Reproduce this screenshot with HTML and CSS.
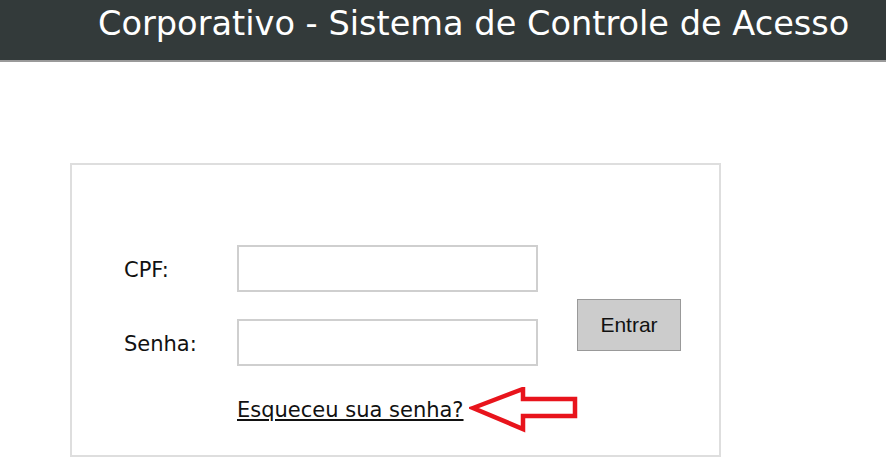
FILE: index.html
```html
<!DOCTYPE html>
<html lang="pt-BR">
<head>
<meta charset="utf-8">
<title>Corporativo - Sistema de Controle de Acesso</title>
<link rel="stylesheet" href="styles.css">
</head>
<body>
<header class="topbar">
  <h1 class="title">Corporativo - Sistema de Controle de Acesso</h1>
</header>
<main class="page">
  <section class="login-box">
    <form class="login-form">
      <label class="field-label row1" for="cpf">CPF:</label>
      <input class="field-input row1" id="cpf" type="text">
      <label class="field-label row2" for="senha">Senha:</label>
      <input class="field-input row2" id="senha" type="password">
      <button class="btn-enter" type="button">Entrar</button>
      <div class="forgot-row">
        <a class="forgot-link" href="#">Esqueceu sua senha?</a>
        <svg class="arrow" width="112" height="46" viewBox="0 0 112 46">
          <polygon points="4,21 54,2 54,12 106,12 106,29 54,29 54,42" fill="#fff" stroke="#e8141c" stroke-width="4.5" stroke-linejoin="miter"/>
        </svg>
      </div>
    </form>
  </section>
</main>
</body>
</html>
```
FILE: styles.css
```css
html, body {
  margin: 0;
  padding: 0;
  background: #fff;
}
body {
  font-family: "DejaVu Sans", Verdana, sans-serif;
  color: #111;
}
.topbar {
  box-sizing: border-box;
  height: 62px;
  background: #333a3a;
  border-bottom: 2px solid #9a9a9a;
  display: flex;
  align-items: flex-start;
  padding: 4px 0 0 98px;
}
.title {
  margin: 0;
  font-family: "DejaVu Sans", sans-serif;
  font-weight: normal;
  font-size: 33.6px;
  line-height: 40px;
  color: #fff;
  white-space: nowrap;
}
.page {
  padding: 101px 0 0 70px;
}
.login-box {
  width: 647px;
  height: 290px;
  border: 2px solid #dedede;
}
.login-form {
  display: grid;
  grid-template-columns: 113px 301px 39px 104px;
  grid-template-rows: 47px 47px auto;
  row-gap: 27px;
  padding: 80px 0 0 52px;
}
.field-label {
  grid-column: 1;
  align-self: center;
  margin-top: 2px;
  font-size: 21px;
  font-family: "DejaVu Sans", sans-serif;
  color: #111;
}
.row1 { grid-row: 1; }
.row2 { grid-row: 2; }
.field-input {
  grid-column: 2;
  box-sizing: border-box;
  width: 301px;
  height: 47px;
  border: 2px solid #cfcfcf;
  background: #fff;
  margin: 0;
}
.btn-enter {
  grid-column: 4;
  grid-row: 1 / 3;
  align-self: start;
  margin-top: 54px;
  width: 104px;
  height: 52px;
  background: #cccccc;
  border: 1px solid #999;
  font-family: "Liberation Sans", Arial, sans-serif;
  font-size: 21px;
  color: #111;
  padding: 0;
}
.forgot-row {
  grid-column: 2 / 5;
  grid-row: 3;
  display: flex;
  align-items: center;
  gap: 5px;
  margin-top: -6px;
}
.forgot-link {
  font-family: "DejaVu Sans", sans-serif;
  font-size: 21px;
  color: #111;
  text-decoration: underline;
}
.arrow {
  display: block;
}
```
